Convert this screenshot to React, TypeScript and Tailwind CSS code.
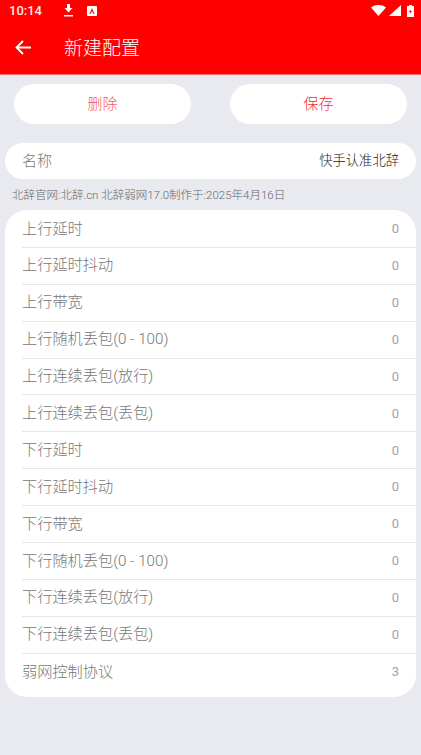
const FONT = "font-['Roboto','Noto_Sans_CJK_SC',sans-serif]";

const rows = [
  ['上行延时', '0'],
  ['上行延时抖动', '0'],
  ['上行带宽', '0'],
  ['上行随机丢包(0 - 100)', '0'],
  ['上行连续丢包(放行)', '0'],
  ['上行连续丢包(丢包)', '0'],
  ['下行延时', '0'],
  ['下行延时抖动', '0'],
  ['下行带宽', '0'],
  ['下行随机丢包(0 - 100)', '0'],
  ['下行连续丢包(放行)', '0'],
  ['下行连续丢包(丢包)', '0'],
  ['弱网控制协议', '3'],
];

function StatusBar() {
  return (
    <div className="h-[21px] pl-[9px] pr-[7px] flex items-center text-white">
      <span className="text-[13px] font-medium leading-none opacity-90 w-[45px]">10:14</span>
      <svg className="w-[11px] h-[13px] ml-[9px]" viewBox="0 0 11 13" fill="currentColor">
        <path d="M4 0h3v4h2.500L5.500 8.500 1.500 4H4zM1 11h9v1.500H1z" />
      </svg>
      <svg className="w-[10px] h-[10px] ml-[13px]" viewBox="0 0 10 10">
        <rect width="10" height="10" rx="1" fill="#fff" />
        <path d="M5 2 7.500 8H6.300L5 5 3.700 8H2.500z" fill="#f00" />
      </svg>
      <div className="flex-1" />
      <svg className="w-[15px] h-[11px]" viewBox="0 0 15 11" fill="currentColor">
        <path d="M0 2.500C4-.8 11-.8 15 2.500L7.500 11z" />
      </svg>
      <svg className="w-[12px] h-[11px] ml-[3px]" viewBox="0 0 12 11" fill="currentColor">
        <path d="M12 0v11H0z" />
      </svg>
      <svg className="w-[7px] h-[12px] ml-[6px]" viewBox="0 0 7 12">
        <path d="M2 0h3v1h2v11H0V1h2z" fill="#fff" />
        <path d="M1.500 3h4v3h-4z" fill="#fff" opacity="0.5" />
        <path d="M3.800 4 2 7h1.300l-.3 2 2-3H3.600z" fill="#f00" />
      </svg>
    </div>
  );
}

export default function App() {
  return (
    <div className={`${FONT} w-[421px] h-[755px] overflow-hidden bg-[#e8eaf0]`}>
      {/* Header */}
      <div className="h-[75px] bg-[#ff0000] border-b border-[#f46a6a]">
        <StatusBar />
        <div className="h-[53px] flex items-center text-white">
          <svg className="w-[16px] h-[15px] ml-[15px]" viewBox="0 0 16 15" fill="none" stroke="currentColor" strokeWidth={1.8}>
            <path d="M16 7.500H1.500M8 1 1.500 7.500 8 14" />
          </svg>
          <span className="ml-[33px] mt-[2px] text-[19px] leading-none font-light">新建配置</span>
        </div>
      </div>

      {/* Buttons */}
      <div className="flex justify-between px-[14px] mt-[9px]">
        <button className="w-[177px] h-[40px] rounded-full bg-white text-[15px] font-light text-[#f65a5a]">删除</button>
        <button className="w-[177px] h-[40px] rounded-full bg-white text-[15px] font-light text-[#f52a2a]">保存</button>
      </div>

      {/* Name */}
      <div className="mx-[5px] mt-[19px] h-[36px] rounded-[18px] bg-white flex items-center justify-between pl-[17px] pr-[17px]">
        <span className="text-[15px] text-[#777777] font-light">名称</span>
        <span className="text-[13.300px] text-[#222222] font-light">快手认准北辞</span>
      </div>

      <p className="mt-[9px] ml-[12px] h-[14px] text-[11.500px] leading-[14px] font-light text-[#666666]">
        北辞官网:北辞.cn 北辞弱网17.0制作于:2025年4月16日
      </p>

      {/* Params */}
      <div className="mx-[5px] mt-[8px] pt-[1px] pb-[6px] rounded-[22px] bg-white">
        {rows.map(([label, value], i) => (
          <div key={label} className="h-[36.900px] pl-[17px] flex flex-col">
            <div className="flex-1 flex items-center justify-between pr-[17px]">
              <span className="text-[15.200px] text-[#777777] font-light">{label}</span>
              <span className="text-[13px] text-[#a3a3a3]">{value}</span>
            </div>
            {i < rows.length - 1 && <div className="h-px bg-[#e8e8e8]" />}
          </div>
        ))}
      </div>
    </div>
  );
}
